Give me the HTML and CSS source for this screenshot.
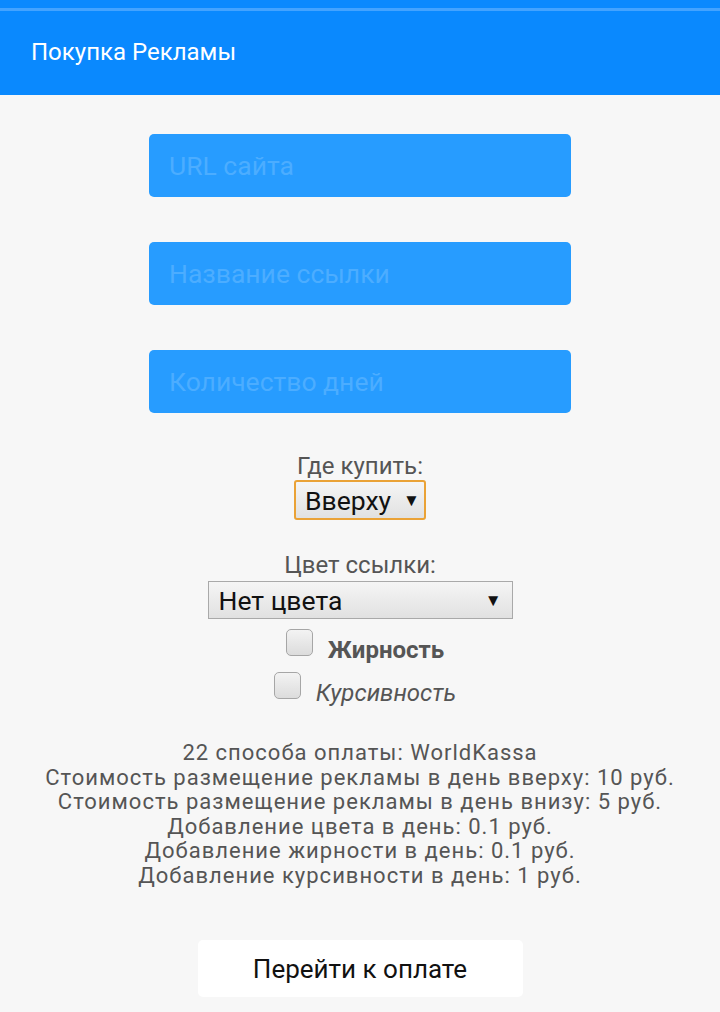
FILE: index.html
```html
<!DOCTYPE html>
<html lang="ru">

<head>
    <meta charset="UTF-8">
    <meta name="viewport" content="width=device-width, initial-scale=1.0">
    <title>Покупка Рекламы</title>
    <link rel="stylesheet" href="styles.css">
</head>

<body>
    <!-- Header -->
    <div class="header">
        <p>Покупка Рекламы</p>
    </div>

    <!-- Form -->
    <form class="main-content" onsubmit="return false">
        <div class="fields">
            <input class="field" type="text" placeholder="URL сайта">
            <input class="field" type="text" placeholder="Название ссылки">
            <input class="field" type="text" placeholder="Количество дней">
        </div>

        <label class="caption caption-first">Где купить:</label>
        <div class="select select-place">
            <span>Вверху</span>
            <span class="arrow">&#9660;</span>
        </div>

        <label class="caption caption-second">Цвет ссылки:</label>
        <div class="select select-color">
            <span>Нет цвета</span>
            <span class="arrow">&#9660;</span>
        </div>

        <div class="check-row check-bold">
            <span class="check-box"></span>
            <span class="check-label">Жирность</span>
        </div>
        <div class="check-row check-italic">
            <span class="check-box"></span>
            <span class="check-label">Курсивность</span>
        </div>

        <div class="info">
            <p>22 способа оплаты: WorldKassa</p>
            <p>Стоимость размещение рекламы в день вверху: 10 руб.</p>
            <p>Стоимость размещение рекламы в день внизу: 5 руб.</p>
            <p>Добавление цвета в день: 0.1 руб.</p>
            <p>Добавление жирности в день: 0.1 руб.</p>
            <p>Добавление курсивности в день: 1 руб.</p>
        </div>

        <button class="pay-btn" type="submit">Перейти к оплате</button>
    </form>
</body>

</html>
```

FILE: styles.css
```css
/* Reset */
* {
    margin: 0;
    padding: 0;
    box-sizing: border-box;
}

body {
    font-family: Roboto, 'Noto Sans', sans-serif;
    background-color: #f7f7f7;
    color: #555;
    min-height: 100vh;
    overflow: hidden;
}

/* Header */
.header {
    height: 95px;
    padding-left: 31px;
    padding-top: 9px;
    display: flex;
    align-items: center;
    /* status strip + thin light line on top */
    background: linear-gradient(#0a89fe 0 8px, #43a3ff 8px 11px, #0a89fe 11px);
}

.header p {
    color: #fff;
    font-size: 24px;
}

/* Main content */
.main-content {
    display: flex;
    flex-direction: column;
    align-items: center;
    padding-top: 39px;
}

.fields {
    display: flex;
    flex-direction: column;
    gap: 45px;
}

.field {
    width: 422px;
    height: 63px;
    border: none;
    border-radius: 5px;
    background-color: #279cff;
    padding: 0 20px;
    font-family: Roboto, sans-serif;
    font-size: 26.5px;
    color: #fff;
    outline: none;
}

.field::placeholder {
    color: #4cadff;
}

.caption {
    font-size: 24px;
    line-height: 28px;
    color: #555;
}

.caption-first {
    margin-top: 39px;
}

.caption-second {
    margin-top: 31px;
}

/* Fake select boxes */
.select {
    display: flex;
    justify-content: space-between;
    align-items: center;
    background: linear-gradient(#f5f5f5, #e1e1e1);
    color: #111;
    font-size: 26.5px;
    cursor: pointer;
}

.select .arrow {
    font-size: 17px;
    margin-left: 12px;
}

.select-place {
    width: 132px;
    height: 40px;
    padding: 0 10px 0 9px;
    border: 2px solid #eaa236;
    border-radius: 3px;
}

.select-color {
    width: 305px;
    height: 38px;
    margin-top: 2px;
    padding: 0 10px 0 10px;
    border: 1px solid #a9a9a9;
}

/* Checkboxes */
.check-row {
    display: flex;
    align-items: flex-start;
    margin-left: 10px;
    font-size: 24px;
    line-height: 28px;
    color: #555;
}

.check-box {
    width: 27px;
    height: 27px;
    border: 1px solid #a6a6a6;
    border-radius: 5px;
    background: linear-gradient(#f3f3f3, #dcdcdc);
    margin-right: 15px;
}

.check-label {
    margin-top: 7px;
}

.check-bold {
    margin-top: 10px;
}

.check-bold .check-label {
    font-weight: bold;
}

.check-italic {
    margin-top: 8px;
}

.check-italic .check-label {
    font-style: italic;
}

/* Price info */
.info {
    margin-top: 34px;
    text-align: center;
    font-size: 22px;
    letter-spacing: 1px;
    line-height: 24.5px;
    color: #555;
}

/* Pay button */
.pay-btn {
    margin-top: 52px;
    width: 325px;
    height: 57px;
    border: none;
    border-radius: 5px;
    background-color: #fff;
    font-family: Roboto, sans-serif;
    font-size: 26px;
    color: #111;
    cursor: pointer;
}
```
